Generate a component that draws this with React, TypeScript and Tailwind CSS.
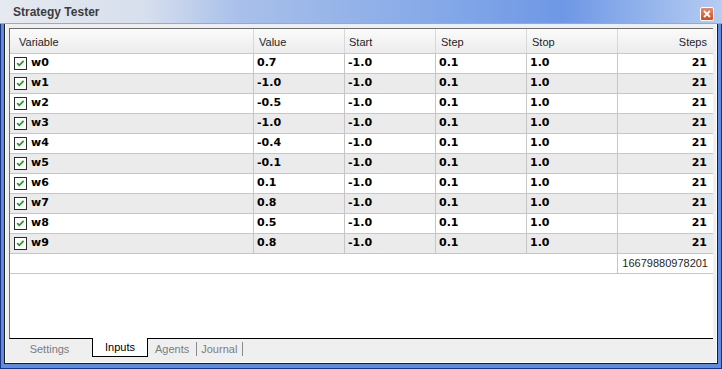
import React from "react";

const rows: [string, string][] = [
  ["w0", "0.7"],
  ["w1", "-1.0"],
  ["w2", "-0.5"],
  ["w3", "-1.0"],
  ["w4", "-0.4"],
  ["w5", "-0.1"],
  ["w6", "0.1"],
  ["w7", "0.8"],
  ["w8", "0.5"],
  ["w9", "0.8"],
];

const sans = { fontFamily: '"Liberation Sans", Arial, sans-serif' };
const bold = { fontFamily: '"DejaVu Sans", Verdana, sans-serif' };

function Check() {
  return (
    <div className="w-[13px] h-[13px] border border-[#2a2a2a] bg-white flex items-center justify-center shrink-0">
      <svg width="11" height="11" viewBox="0 0 11 11">
        <path d="M2.2 5.2 L4.3 7.3 L8.6 2.8" stroke="#1f9e1f" strokeWidth="1.8" fill="none" />
      </svg>
    </div>
  );
}

export default function App() {
  const cols = "grid grid-cols-[244px_91px_91px_91px_91px_94px]";
  return (
    <div className="w-[722px] h-[369px] flex flex-col overflow-hidden bg-[#5d8ce0]">
      {/* Title bar */}
      <div className="h-[24px] shrink-0 flex items-center justify-between border-b border-[#9fa9ba] bg-[linear-gradient(to_right,#e6eaf0_0%,#d7dfed_20%,#a9c0ea_33%,#7ea4e7_66%,#6e97e5_78%,#b6cdf2_100%)]">
        <span className="ml-[13px] mt-[1px] text-[12px] font-bold text-[#3c3c3c]" style={sans}>
          Strategy Tester
        </span>
        <div className="mr-[8px] mt-[4px] w-[14px] h-[14px] border border-white rounded-[2px] bg-[linear-gradient(to_bottom,#e98a66,#cf4a22)] flex items-center justify-center">
          <svg width="8" height="8" viewBox="0 0 8 8">
            <path d="M1 1 L7 7 M7 1 L1 7" stroke="white" strokeWidth="1.8" />
          </svg>
        </div>
      </div>
      {/* Frame */}
      <div className="flex-1 flex flex-col border-x border-b border-[#1a3480]">
        <div className="flex-1 flex flex-col border-x-[3px] border-b-[4px] border-[#5d8ce0]">
          <div className="flex-1 flex flex-col border-x border-b border-[#1c1c1c]">
            <div className="flex-1 flex flex-col border-l border-r border-b border-white bg-[#efefef] pt-[4px] px-[3px]">
              {/* Panel */}
              <div className="h-[311px] flex flex-col bg-white border-l border-t border-[#6e6e6e] border-r-[#d6d6d6] border-b border-b-black">
                {/* header */}
                <div
                  className={`${cols} h-[25px] border-b border-[#c8c8c8] bg-[linear-gradient(to_bottom,#fbfbfb,#ececec)] text-[11px] text-[#1e1e1e]`}
                  style={sans}
                >
                  <div className="border-r border-[#d8d8d8] pl-[9px] flex items-center pt-[2px]">Variable</div>
                  <div className="border-r border-[#d8d8d8] pl-[5px] flex items-center pt-[2px]">Value</div>
                  <div className="border-r border-[#d8d8d8] pl-[4px] flex items-center pt-[2px]">Start</div>
                  <div className="border-r border-[#d8d8d8] pl-[5px] flex items-center pt-[2px]">Step</div>
                  <div className="border-r border-[#d8d8d8] pl-[5px] flex items-center pt-[2px]">Stop</div>
                  <div className="pr-[5px] flex items-center justify-end pt-[2px]">Steps</div>
                </div>
                {rows.map(([name, val], i) => (
                  <div
                    key={name}
                    className={`${cols} h-[20px] border-b border-[#c6c6c6] text-[11px] font-bold text-black ${
                      i % 2 === 1 ? "bg-[#ebebeb]" : "bg-white"
                    }`}
                    style={bold}
                  >
                    <div className="border-r border-[#c6c6c6] pl-[4px] flex items-center gap-[4px]">
                      <Check />
                      <span>{name}</span>
                    </div>
                    <div className="border-r border-[#c6c6c6] pl-[3px] flex items-center">{val}</div>
                    <div className="border-r border-[#c6c6c6] pl-[3px] flex items-center">-1.0</div>
                    <div className="border-r border-[#c6c6c6] pl-[3px] flex items-center">0.1</div>
                    <div className="border-r border-[#c6c6c6] pl-[3px] flex items-center">1.0</div>
                    <div className="pr-[5px] flex items-center justify-end">21</div>
                  </div>
                ))}
                <div className={`${cols} h-[20px] border-b border-[#c6c6c6] text-[11px] text-[#1e1e1e]`} style={sans}>
                  <div />
                  <div />
                  <div />
                  <div />
                  <div className="border-r border-[#c6c6c6]" />
                  <div className="pr-[4px] flex items-center justify-end">16679880978201</div>
                </div>
                <div className="flex-1" />
              </div>
              {/* Tabs */}
              <div className="flex items-start h-[22px] text-[11px]" style={sans}>
                <div className="w-[83px] h-[18px] flex items-center justify-center text-[#7c7c7c] pr-[2px] mt-[1px]">
                  Settings
                </div>
                <div className="-mt-px w-[56px] h-[19px] bg-white border-x border-b border-black flex items-center justify-center text-black">
                  Inputs
                </div>
                <div className="flex items-center h-[18px] mt-[1px] text-[#7c7c7c]">
                  <span className="ml-[7px]">Agents</span>
                  <span className="ml-[7px] w-px h-[14px] bg-[#8a8a8a]" />
                  <span className="ml-[4px]">Journal</span>
                  <span className="ml-[5px] w-px h-[14px] bg-[#8a8a8a]" />
                </div>
              </div>
            </div>
          </div>
        </div>
      </div>
    </div>
  );
}
